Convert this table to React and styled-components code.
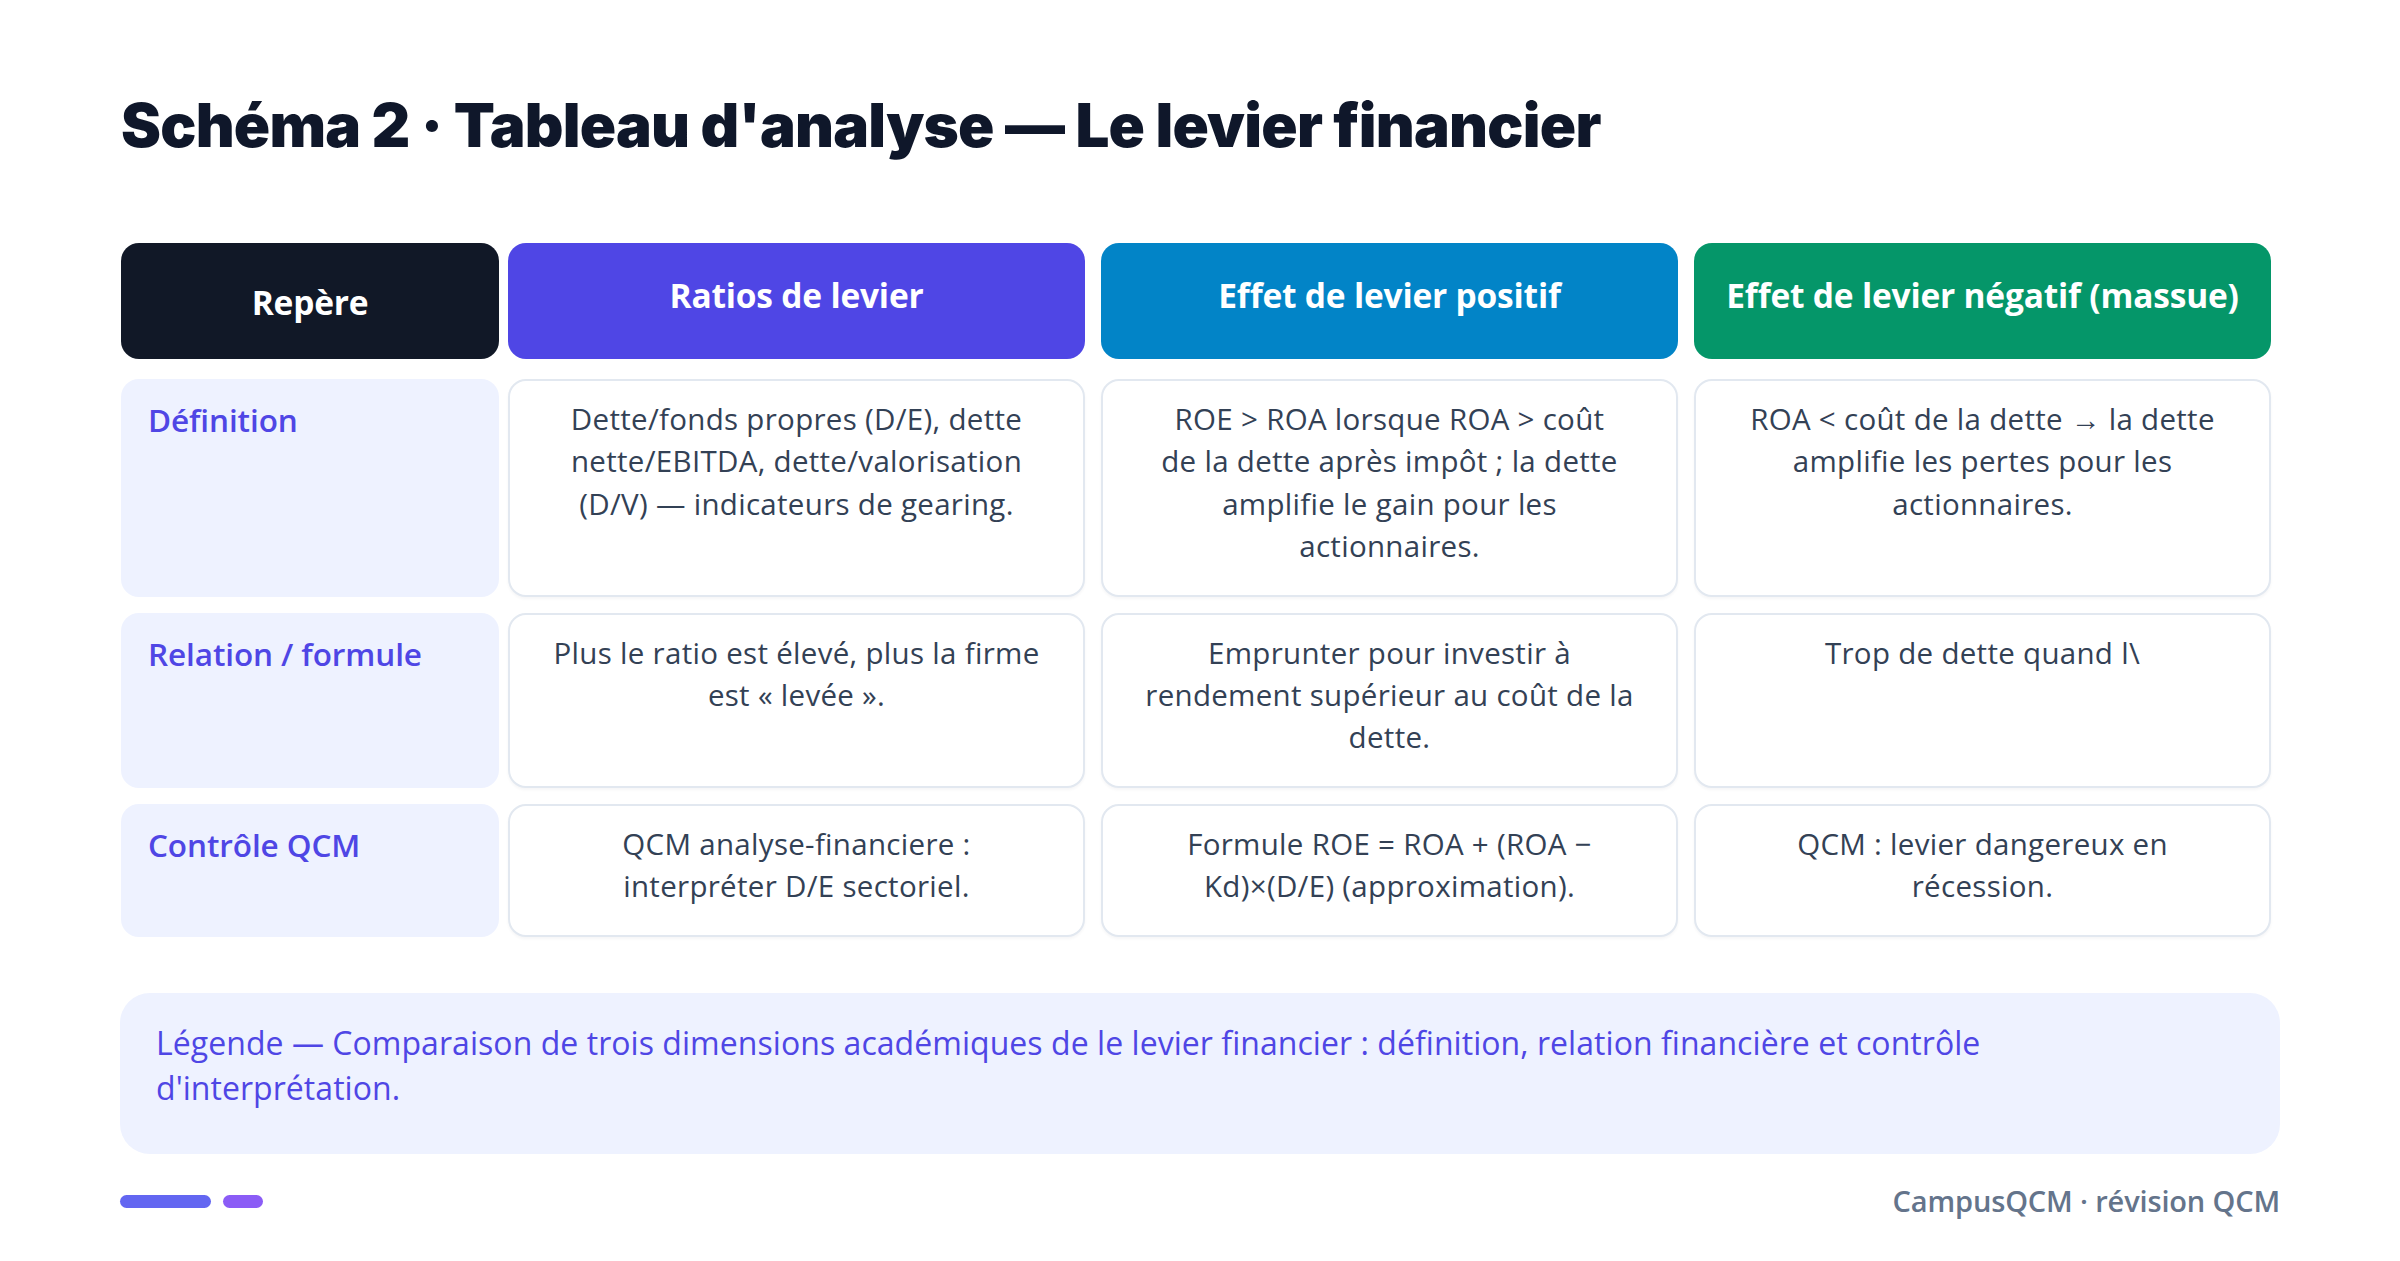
import React from "react";
import styled, { createGlobalStyle } from "styled-components";

const Global = createGlobalStyle`
  html, body { margin: 0; padding: 0; background: #ffffff; }
  body { font-family: "Open Sans", "Noto Sans", sans-serif; }
  * { box-sizing: border-box; }
`;

const Page = styled.div`
  width: 2400px;
  min-height: 1261px;
  padding: 89px 120px 0 120px;
  display: flex;
  flex-direction: column;
`;

const Title = styled.h1`
  margin: 0;
  font-family: Inter, "Noto Sans", sans-serif;
  font-weight: 900;
  font-size: 60px;
  line-height: 72px;
  letter-spacing: -0.75px;
  color: #0f172a;
  padding-left: 1px;
`;

const Table = styled.div`
  margin-top: 82px;
  margin-left: 1px;
  display: grid;
  grid-template-columns: 378px 584px 584px 578px;
  column-gap: 9px;
  row-gap: 16px;
`;

const HeadCell = styled.div`
  width: ${(p) => (p.$first ? "auto" : "577px")};
  height: 116px;
  border-radius: 18px;
  background: ${(p) => p.$bg};
  color: #ffffff;
  font-weight: 700;
  font-size: 33.5px;
  display: flex;
  align-items: center;
  justify-content: center;
  padding-top: ${(p) => (p.$first ? "2px" : "0")};
  padding-bottom: ${(p) => (p.$first ? "0" : "12px")};
  margin-bottom: 4px;
  letter-spacing: -0.2px;
`;

const LabelCell = styled.div`
  background: #eef2ff;
  border-radius: 18px;
  padding: 20px 20px 26px 27px;
  color: #4f46e5;
  font-weight: 600;
  font-size: 31.5px;
  line-height: 42.3px;
  letter-spacing: -0.1px;
`;

const Cell = styled.div`
  width: 577px;
  background: #ffffff;
  border: 2px solid #e2e8f0;
  border-radius: 18px;
  box-shadow: 0 2px 3px rgba(15, 23, 42, 0.04);
  padding: 17px 12px 27.5px 12px;
  color: #334155;
  font-size: 29.5px;
  line-height: 42.3px;
  text-align: center;
  white-space: pre-line;
  letter-spacing: 0.3px;
`;

const Legend = styled.div`
  margin-top: 56px;
  background: #eef2ff;
  border-radius: 30px;
  padding: 27px 36px 44px 36px;
  color: #4f46e5;
  font-size: 32px;
  line-height: 45px;
  letter-spacing: 0.05px;
`;

const LegendText = styled.p`
  margin: 0;
  max-width: 1900px;
`;

const Footer = styled.div`
  margin-top: 28px;
  display: flex;
  align-items: center;
  justify-content: space-between;
`;

const Dots = styled.div`
  display: flex;
  gap: 12px;
  align-items: center;
`;

const Bar = styled.span`
  display: block;
  width: ${(p) => p.$w}px;
  height: 13px;
  border-radius: 7px;
  background: ${(p) => p.$c};
`;

const Brand = styled.div`
  color: #64748b;
  font-weight: 600;
  font-size: 29px;
  line-height: 38px;
  letter-spacing: -0.15px;
`;

const heads = [
  { t: "Repère", bg: "#111827", first: true },
  { t: "Ratios de levier", bg: "#4f46e5" },
  { t: "Effet de levier positif", bg: "#0284c7" },
  { t: "Effet de levier négatif (massue)", bg: "#059669" },
];

const rows = [
  {
    label: "Définition",
    cells: [
      "Dette/fonds propres (D/E), dette\nnette/EBITDA, dette/valorisation\n(D/V) — indicateurs de gearing.",
      "ROE > ROA lorsque ROA > coût\nde la dette après impôt ; la dette\namplifie le gain pour les\nactionnaires.",
      "ROA < coût de la dette → la dette\namplifie les pertes pour les\nactionnaires.",
    ],
  },
  {
    label: "Relation / formule",
    cells: [
      "Plus le ratio est élevé, plus la firme\nest « levée ».",
      "Emprunter pour investir à\nrendement supérieur au coût de la\ndette.",
      "Trop de dette quand l\\",
    ],
  },
  {
    label: "Contrôle QCM",
    cells: [
      "QCM analyse-financiere :\ninterpréter D/E sectoriel.",
      "Formule ROE = ROA + (ROA −\nKd)×(D/E) (approximation).",
      "QCM : levier dangereux en\nrécession.",
    ],
  },
];

export default function App() {
  return (
    <>
      <Global />
      <Page>
        <Title>Schéma 2 · Tableau d'analyse — Le levier financier</Title>
        <Table>
          {heads.map((h) => (
            <HeadCell key={h.t} $bg={h.bg} $first={h.first}>
              {h.t}
            </HeadCell>
          ))}
          {rows.map((r) => (
            <React.Fragment key={r.label}>
              <LabelCell>{r.label}</LabelCell>
              {r.cells.map((c, i) => (
                <Cell key={i}>{c}</Cell>
              ))}
            </React.Fragment>
          ))}
        </Table>
        <Legend>
          <LegendText>
            Légende — Comparaison de trois dimensions académiques de le levier financier : définition, relation financière et contrôle d'interprétation.
          </LegendText>
        </Legend>
        <Footer>
          <Dots>
            <Bar $w={91} $c="#6366f1" />
            <Bar $w={40} $c="#8b5cf6" />
          </Dots>
          <Brand>CampusQCM · révision QCM</Brand>
        </Footer>
      </Page>
    </>
  );
}
